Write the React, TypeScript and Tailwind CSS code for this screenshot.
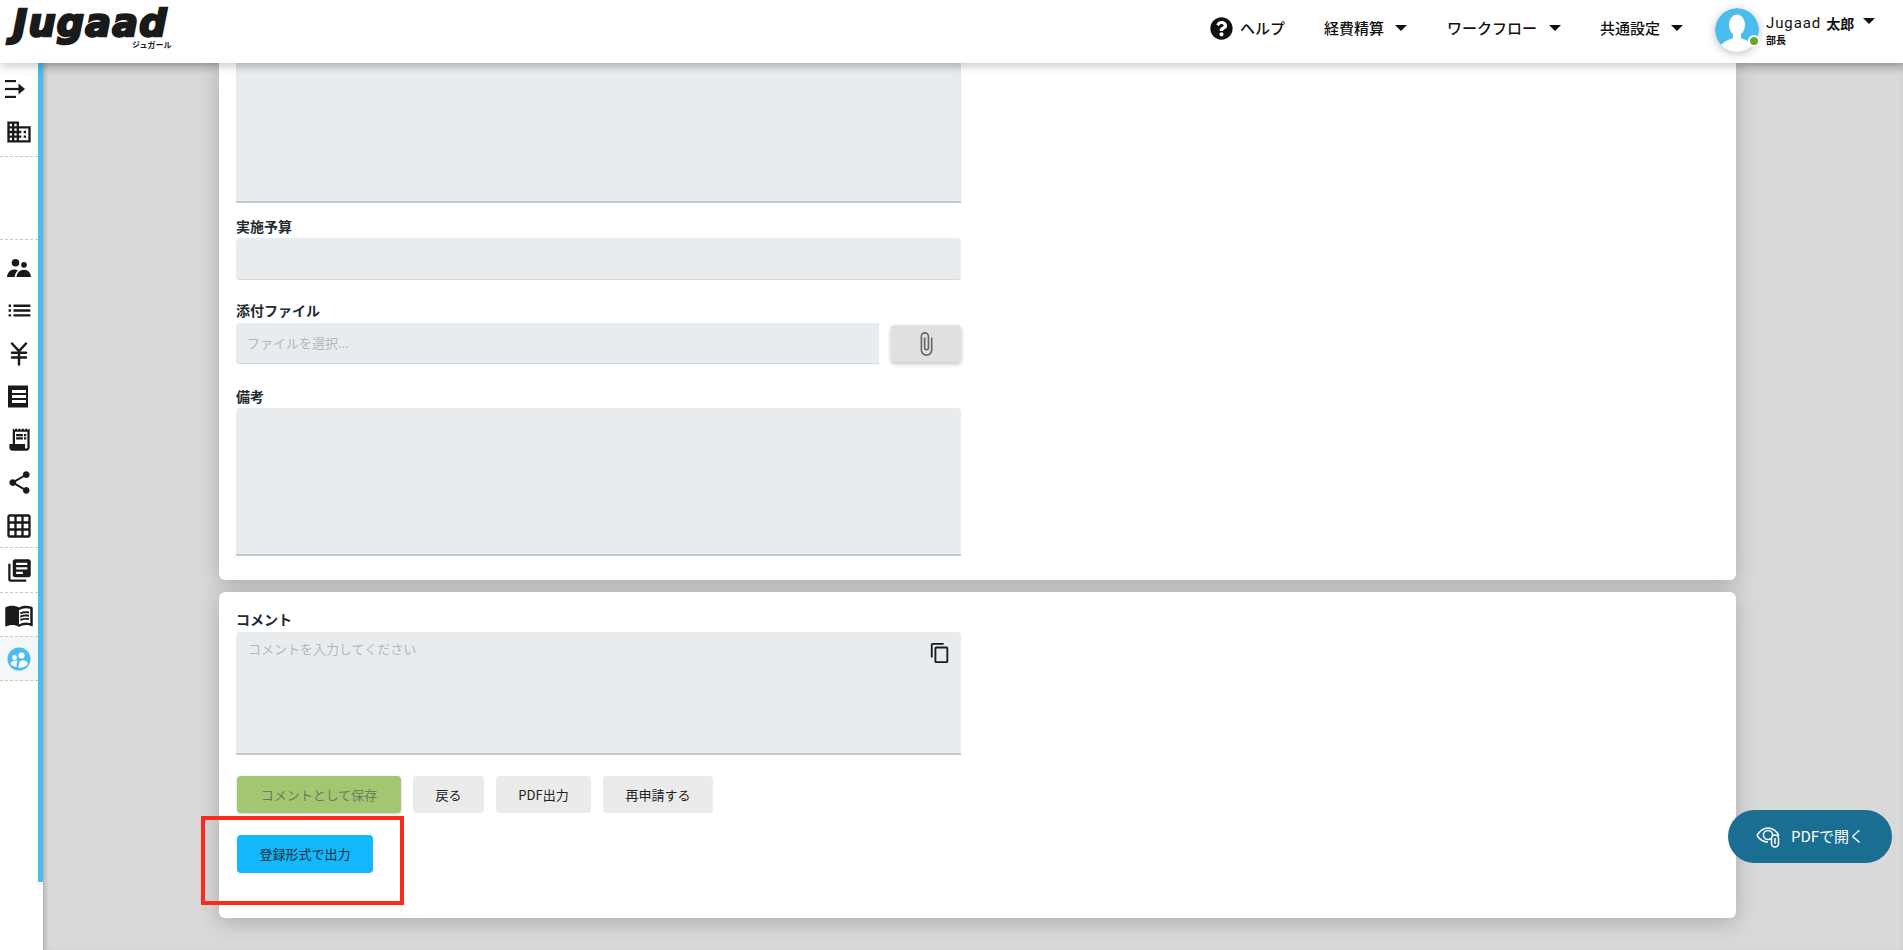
import React from "react";
import { FaQuestionCircle } from "react-icons/fa";
import {
  MdAttachFile,
  MdBusiness,
  MdContentCopy,
  MdGridOn,
  MdLibraryBooks,
  MdList,
  MdMenuBook,
  MdReceiptLong,
  MdShare,
} from "react-icons/md";
import { LuJapaneseYen } from "react-icons/lu";

const Caret = ({ className = "" }: { className?: string }) => (
  <span className={`inline-block h-0 w-0 shrink-0 border-x-[6px] border-t-[6px] border-x-transparent border-t-[#111] ${className}`} />
);

const MenuArrow = () => (
  <svg width="20" height="18" viewBox="0 0 20 18" fill="#1a1a1a" className="mr-[8px]">
    <rect x="0" y="0" width="11" height="2.2" />
    <rect x="0" y="7.9" width="15" height="2.2" />
    <rect x="0" y="15.8" width="11" height="2.2" />
    <path d="M13.5 3.5 20 9l-6.5 5.5z" />
  </svg>
);

const Team = () => (
  <svg width="24" height="18" viewBox="0 0 24 18" fill="#1a1a1a">
    <circle cx="8.5" cy="3.8" r="3.8" />
    <circle cx="17" cy="5.8" r="2.9" />
    <path d="M0 18c.3-4.5 3.5-7.5 7-7.5 1.6 0 3 .4 4 1.2-1.9 1.2-3 3.4-3.3 6.3z" />
    <path d="M9.5 18c.2-4 3.4-7.2 7.5-7.2s6.8 3.2 7 7.2z" />
  </svg>
);

const Slip = () => (
  <svg width="22" height="23" viewBox="0 0 22 23" fill="#1a1a1a">
    <path d="M0 1 1 0l1 1 1-1 1 1 1-1 1 1 1-1 1 1 1-1 1 1 1-1 1 1 1-1 1 1 1-1 1 1 1-1 1 1 1-1 1 1v21l-1 1-1-1-1 1-1-1-1 1-1-1-1 1-1-1-1 1-1-1-1 1-1-1-1 1-1-1-1 1-1-1-1 1-1-1-1 1-1-1z" />
    <rect x="4" y="5" width="14" height="3" fill="#fff" />
    <rect x="4" y="10" width="14" height="3" fill="#fff" />
    <rect x="4" y="15" width="14" height="3" fill="#fff" />
  </svg>
);

const GroupCircle = () => (
  <svg width="24" height="24" viewBox="0 0 24 24">
    <circle cx="12" cy="12" r="11.5" fill="#4bbcee" />
    <circle cx="7.5" cy="10.5" r="2.4" fill="#fff" />
    <circle cx="14.5" cy="8.5" r="3.1" fill="#fff" />
    <path d="M3.5 17c.5-2.2 2.2-3.6 5-3.6.8 0 1.5.1 2 .3-.6 1-.9 2.5-.9 6.3-2.6-.4-4.8-1.2-6.1-3z" fill="#fff" />
    <path d="M11.5 20.7c0-4 1.2-7.5 4.2-7.5 2.5 0 4.6 1.4 5.3 3.8-1.6 2.2-5 3.9-9.5 3.7z" fill="#fff" />
  </svg>
);

const Avatar = () => (
  <div className="relative h-[44px] w-[44px] rounded-full bg-white shadow-[0_2px_8px_rgba(0,0,0,0.25)]">
    <svg width="44" height="44" viewBox="0 0 44 44" className="rounded-full">
      <circle cx="22" cy="22" r="22" fill="#4bbcee" />
      <ellipse cx="22" cy="17" rx="8" ry="10.5" fill="#fff" />
      <path d="M18 25h8v5c4 2 10 3 12 8-4 4-10 6-16 6S10 42 6 38c2-5 8-6 12-8z" fill="#fff" />
    </svg>
    <span className="absolute left-[33px] top-[27px] h-[12px] w-[12px] rounded-full border-2 border-white bg-[#6aa82c]" />
  </div>
);

const EyeClip = () => (
  <svg width="26" height="22" viewBox="0 0 26 22" fill="none" stroke="#fff" strokeWidth="1.5">
    <path d="M1 9.5C4 4.5 8 2 12 2s8 2.5 11 7.5" />
    <path d="M1 9.5c3 4.5 7 6.5 11 6.5" />
    <circle cx="12" cy="9" r="4.6" />
    <rect x="15.5" y="9" width="7" height="12" rx="3.5" fill="#1a6e92" />
    <path d="M19 12v6" />
  </svg>
);

const Logo = () => (
  <div className="relative h-[63px] w-[185px]">
    <span className="absolute left-[13px] top-[5px] font-['DejaVu_Sans',sans-serif] text-[38px] font-bold italic leading-[36px] tracking-[1.3px] text-[#1a1a1a] [-webkit-text-stroke:2.5px_#1a1a1a]">
      Jugaad
    </span>
    <span className="absolute left-[132px] top-[41px] text-[8px] font-bold leading-[8px] text-[#1a1a1a]">ジュガール</span>
  </div>
);

const Row = ({ children, h = "h-[43px]" }: { children: React.ReactNode; h?: string }) => (
  <div className={`flex items-center justify-center text-[#1a1a1a] ${h}`}>{children}</div>
);

const Sidebar = () => (
  <aside className="h-[887px] w-[43px] shrink-0 bg-white">
    <div className="h-[819px] w-[43px] border-r-[5px] border-[#45bdee]">
      <div className="pt-[4px] pb-[3px] border-b border-dashed border-[#c8c8c8]">
        <Row><MenuArrow /></Row>
        <Row><MdBusiness size={28} /></Row>
      </div>
      <div className="h-[83px] border-b border-dashed border-[#c8c8c8]" />
      <div className="pt-[6px] border-b border-dashed border-[#c8c8c8]">
        <Row><Team /></Row>
        <Row><MdList size={29} /></Row>
        <Row><LuJapaneseYen size={28} strokeWidth={2.1} /></Row>
        <Row><Slip /></Row>
        <Row><MdReceiptLong size={27} /></Row>
        <Row><MdShare size={27} /></Row>
        <Row><MdGridOn size={28} /></Row>
      </div>
      <div className="border-b border-dashed border-[#c8c8c8]">
        <Row h="h-[44px]"><MdLibraryBooks size={27} /></Row>
      </div>
      <div className="border-b border-dashed border-[#c8c8c8]">
        <Row h="h-[43px]"><MdMenuBook size={30} /></Row>
      </div>
      <div className="border-b border-dashed border-[#c8c8c8] bg-[#f3f7fa]">
        <Row h="h-[43px]"><GroupCircle /></Row>
      </div>
    </div>
  </aside>
);

const Label = ({ children }: { children: React.ReactNode }) => (
  <p className="h-[20px] text-[14px] font-bold leading-[16px] text-[#212b32]">{children}</p>
);

const Btn = ({ children, className = "" }: { children: React.ReactNode; className?: string }) => (
  <button className={`h-[37px] rounded-[4px] text-[13px] ${className}`}>{children}</button>
);

export default function App() {
  return (
    <div className="relative flex h-[950px] flex-col overflow-hidden bg-[#d9d9d9] font-['Noto_Sans_CJK_JP',sans-serif]">
      <header className="relative z-20 flex h-[63px] shrink-0 items-center bg-white shadow-[0_2px_10px_rgba(0,0,0,0.25)]">
        <Logo />
        <nav className="ml-auto flex h-[56px] items-center self-start text-[15px] font-medium text-[#111]">
          <FaQuestionCircle size={23} className="text-[#111]" />
          <span className="ml-[7px]">ヘルプ</span>
          <span className="ml-[39px]">経費精算</span>
          <Caret className="ml-[11px]" />
          <span className="ml-[40px]">ワークフロー</span>
          <Caret className="ml-[12px]" />
          <span className="ml-[39px]">共通設定</span>
          <Caret className="ml-[11px]" />
          <div className="ml-[32px] mt-[4px]"><Avatar /></div>
          <div className="ml-[7px] mr-[29px] mt-[4px] w-[108px]">
            <div className="flex items-center whitespace-nowrap text-[15px] leading-[20px]">
              <span className="font-['Roboto',sans-serif] font-normal tracking-[0.9px]">Jugaad</span>
              <span className="ml-[5px] text-[14px] font-bold">太郎</span>
              <Caret className="ml-[9px] -mt-[4px]" />
            </div>
            <p className="text-[10px] font-bold leading-[14px]">部長</p>
          </div>
        </nav>
      </header>

      <div className="flex flex-1">
        <Sidebar />
        <main className="flex-1 pl-[176px] pr-[167px] shadow-[inset_5px_0_5px_-3px_rgba(0,0,0,0.18),inset_0_8px_10px_-4px_rgba(0,0,0,0.15)]">
          <section className="h-[517px] w-[1517px] rounded-b-[6px] bg-white pl-[17px] shadow-[0_4px_22px_rgba(0,0,0,0.22)]">
            <div className="w-[725px]">
              <div className="h-[140px] border-b-2 border-[#c6c8ca] bg-[#e9ecef] shadow-[inset_0_8px_8px_-4px_rgba(0,0,0,0.08)]" />
              <div className="mt-[15px]"><Label>実施予算</Label></div>
              <div className="h-[42px] rounded-[4px] border-b border-[#d5d8da] bg-[#e9ecef]" />
              <div className="mt-[22px]"><Label>添付ファイル</Label></div>
              <div className="mt-[1px] flex">
                <div className="flex h-[41px] w-[643px] items-center rounded-l-[4px] border-b border-[#d5d8da] bg-[#e9ecef] pl-[11px] text-[13px] text-[#b4b6b8]">
                  ファイルを選択...
                </div>
                <button className="ml-[12px] mt-[2px] flex h-[37px] w-[70px] items-center justify-center rounded-[4px] bg-[#e0e0e0] text-[#666] shadow-[0_2px_4px_rgba(0,0,0,0.25)]">
                  <MdAttachFile size={26} />
                </button>
              </div>
              <div className="mt-[24px]"><Label>備考</Label></div>
              <div className="h-[148px] rounded-t-[4px] border-b-2 border-[#c6c8ca] bg-[#e9ecef]" />
            </div>
          </section>

          <section className="mt-[12px] h-[326px] w-[1517px] rounded-[6px] bg-white pl-[17px] pt-[19px] shadow-[0_4px_22px_rgba(0,0,0,0.22)]">
            <div className="w-[725px]">
              <Label>コメント</Label>
              <div className="relative mt-[1px] h-[123px] rounded-t-[4px] border-b-2 border-[#c6c8ca] bg-[#e9ecef] pl-[12px] pt-[7px] text-[13px] leading-[20px] text-[#b4b6b8]">
                コメントを入力してください
                <MdContentCopy size={22} className="absolute right-[10px] top-[10px] text-[#1a1a1a]" />
              </div>
              <div className="ml-[1px] mt-[21px] flex gap-[12px]">
                <Btn className="w-[164px] bg-[#a2c771] text-[#6c7d5c] shadow-[0_1px_3px_rgba(0,0,0,0.2)]">コメントとして保存</Btn>
                <Btn className="w-[71px] bg-[#ebebeb] text-[#222]">戻る</Btn>
                <Btn className="w-[95px] bg-[#ebebeb] text-[#222]">PDF出力</Btn>
                <Btn className="w-[110px] bg-[#ebebeb] text-[#222]">再申請する</Btn>
              </div>
              <div className="relative ml-[1px] mt-[22px]">
                <button className="h-[38px] w-[136px] rounded-[4px] bg-[#12b8fb] text-[13px] text-[#1b2b36]">登録形式で出力</button>
                <div className="absolute left-[-36px] top-[-19px] h-[89px] w-[203px] border-[4px] border-[#fb2a1e]" />
              </div>
            </div>
          </section>
        </main>
      </div>

      <button className="absolute left-[1728px] top-[810px] z-10 flex h-[53px] w-[164px] items-center justify-center gap-[9px] rounded-full bg-[#1a6e92] text-[15px] text-white">
        <EyeClip />
        PDFで開く
      </button>
    </div>
  );
}
